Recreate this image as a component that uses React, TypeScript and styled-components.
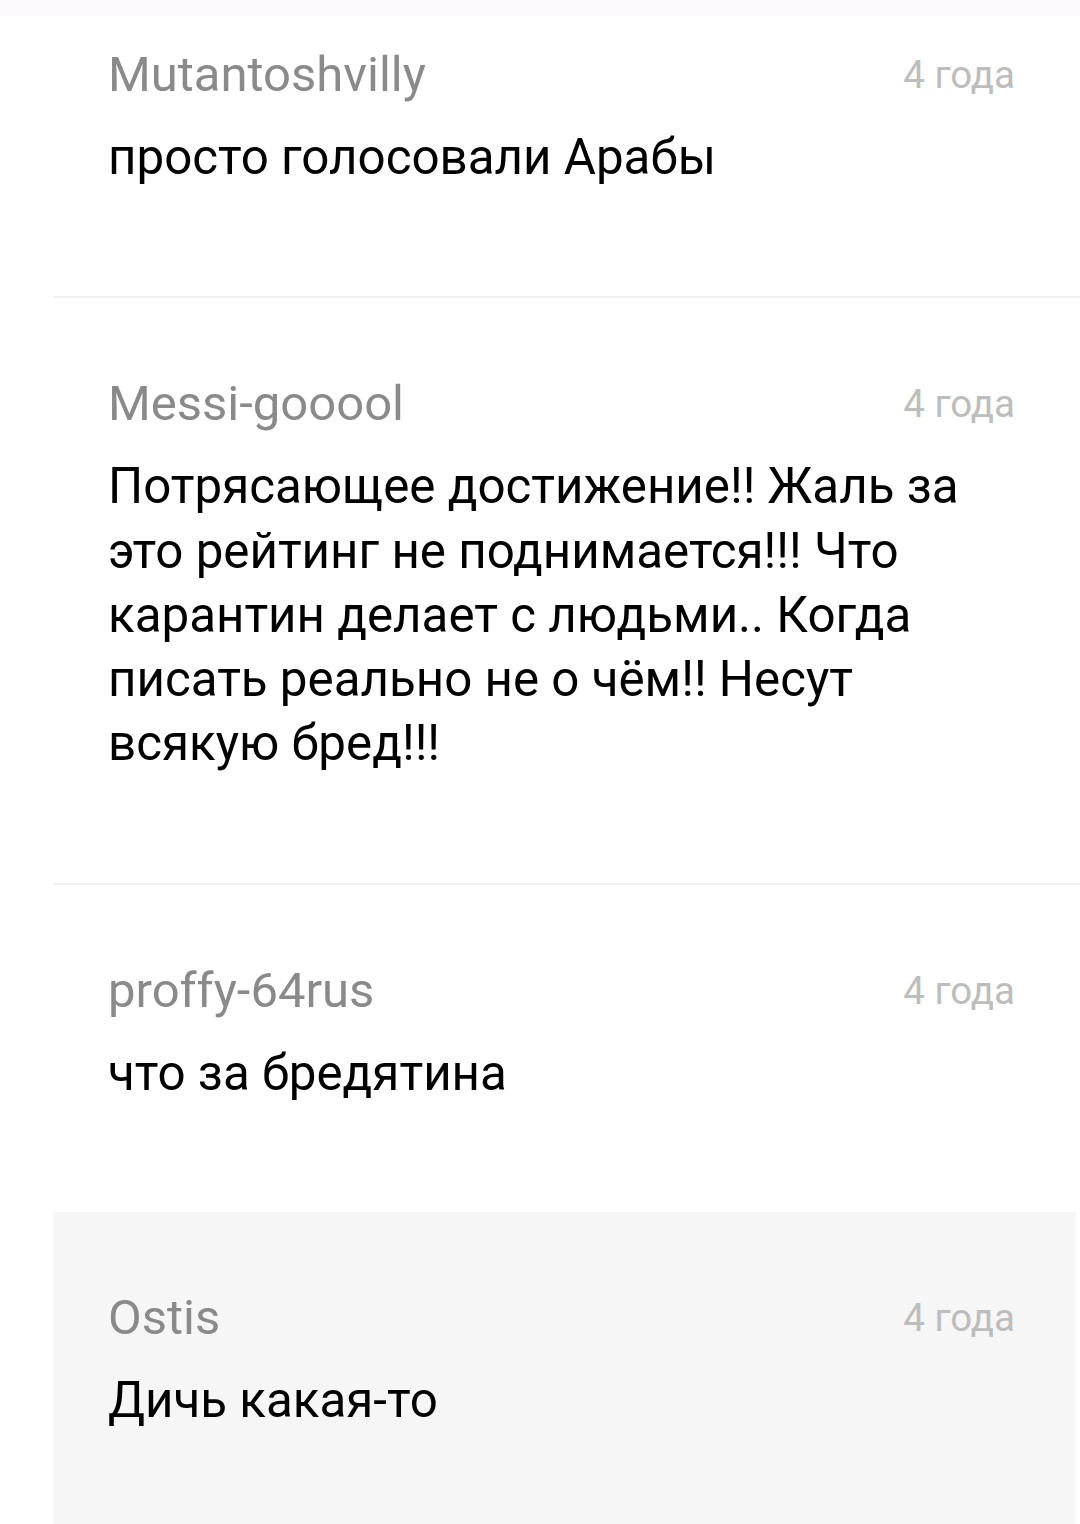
import {} from 'react'
import styled, {createGlobalStyle} from 'styled-components'

type Comment = {
  author: string
  age: string
  text: string
  highlighted?: boolean
}

const comments: Comment[] = [
  {author: 'Mutantoshvilly', age: '4 года', text: 'просто голосовали Арабы'},
  {
    author: 'Messi-gooool',
    age: '4 года',
    text: 'Потрясающее достижение!! Жаль за это рейтинг не поднимается!!! Что карантин делает с людьми.. Когда писать реально не о чём!! Несут всякую бред!!!',
  },
  {author: 'proffy-64rus', age: '4 года', text: 'что за бредятина'},
  {author: 'Ostis', age: '4 года', text: 'Дичь какая-то', highlighted: true},
]

const App = () => {
  return (
    <>
      <GlobalStyle />
      <Page>
        <TopEdge />
        <List>
          {comments.map((c, i) => (
            <Item
              key={c.author}
              $first={i === 0}
              $highlighted={!!c.highlighted}
              $divider={!c.highlighted && !comments[i + 1]?.highlighted}
            >
              <Head>
                <Author>{c.author}</Author>
                <Age>{c.age}</Age>
              </Head>
              <Text>{c.text}</Text>
            </Item>
          ))}
        </List>
      </Page>
    </>
  )
}

const GlobalStyle = createGlobalStyle`
  html, body {
    margin: 0;
    padding: 0;
    background: #ffffff;
  }
  body {
    font-family: Roboto, "Noto Sans", sans-serif;
    -webkit-font-smoothing: antialiased;
  }
`
const Page = styled('div')`
  width: 1080px;
  height: 1524px;
  overflow: hidden;
  background: #ffffff;
`
const TopEdge = styled('div')`
  height: 16px;
  background: #fcf9fc;
`
const List = styled('div')`
  display: flex;
  flex-direction: column;
  margin-left: 53px;
`
const Item = styled('div')<{$first: boolean; $highlighted: boolean; $divider: boolean}>`
  display: flex;
  flex-direction: column;
  gap: 18px;
  padding: ${(p) => (p.$first ? '27px' : '74px')} ${(p) => (p.$highlighted ? '61px' : '65px')} 107px 55px;
  margin-right: ${(p) => (p.$highlighted ? '4px' : '0')};
  background: ${(p) => (p.$highlighted ? '#f6f6f6' : 'transparent')};
  border-bottom: ${(p) => (p.$divider ? '2px solid #f2f0f2' : 'none')};
`
const Head = styled('div')`
  display: flex;
  align-items: center;
  justify-content: space-between;
  height: 64px;
`
const Author = styled('span')`
  font-size: 49px;
  line-height: 64px;
  color: #8a8a8a;
`
const Age = styled('span')`
  font-size: 38.5px;
  line-height: 64px;
  color: #bdbdbd;
`
const Text = styled('div')`
  font-size: 49.3px;
  line-height: 64.25px;
  color: #000000;
  max-width: 870px;
`

export default App
